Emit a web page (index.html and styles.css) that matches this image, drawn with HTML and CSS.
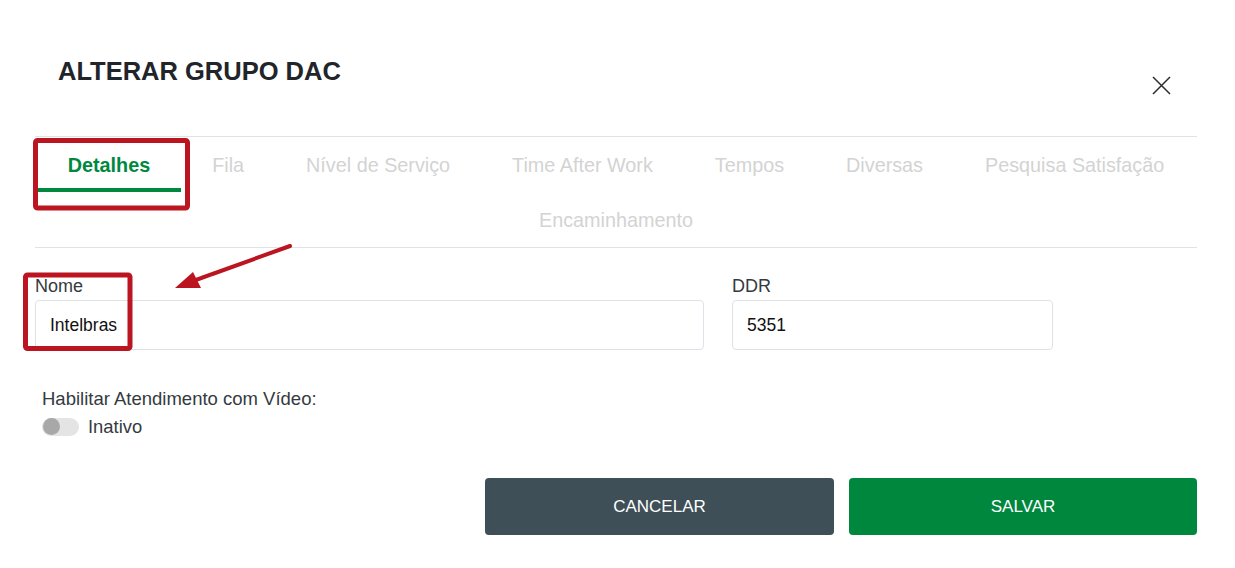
FILE: index.html
```html
<!DOCTYPE html>
<html lang="pt-BR">
<head>
<meta charset="utf-8">
<title>Alterar Grupo DAC</title>
<link rel="stylesheet" href="styles.css">
</head>
<body>
<div class="modal">
  <div class="modal-header">
    <h1 class="modal-title">ALTERAR GRUPO DAC</h1>
    <button class="close" aria-label="Fechar">
      <svg width="19" height="19" viewBox="0 0 19 19"><path d="M1 1 L18 18 M18 1 L1 18" stroke="#2b2b2b" stroke-width="1.5" fill="none"/></svg>
    </button>
  </div>
  <nav class="tabs">
    <span class="tab active">Detalhes</span>
    <span class="tab">Fila</span>
    <span class="tab">Nível de Serviço</span>
    <span class="tab">Time After Work</span>
    <span class="tab">Tempos</span>
    <span class="tab">Diversas</span>
    <span class="tab">Pesquisa Satisfação</span>
    <span class="tab">Encaminhamento</span>
  </nav>
  <div class="form">
    <div class="row">
      <div class="group group-name">
        <label class="label">Nome</label>
        <input class="input" value="Intelbras">
      </div>
      <div class="group group-ddr">
        <label class="label">DDR</label>
        <input class="input" value="5351">
      </div>
    </div>
    <div class="video">
      <div class="label video-label">Habilitar Atendimento com Vídeo:</div>
      <div class="switch-row">
        <span class="switch"><span class="knob"></span></span>
        <span class="switch-text">Inativo</span>
      </div>
    </div>
    <div class="actions">
      <button class="btn btn-cancel">CANCELAR</button>
      <button class="btn btn-save">SALVAR</button>
    </div>
  </div>
</div>
<svg class="annotations" width="1235" height="568" viewBox="0 0 1235 568">
  <rect x="35.5" y="140.5" width="152" height="67.5" rx="2" fill="none" stroke="#bb1521" stroke-width="5"/>
  <rect x="25.5" y="275" width="104.5" height="73.5" rx="2" fill="none" stroke="#bb1521" stroke-width="5"/>
  <line x1="290" y1="246" x2="193" y2="281" stroke="#bb1521" stroke-width="4" stroke-linecap="round"/>
  <polygon points="175,288 193,272 201,288" fill="#bb1521"/>
</svg>
</body>
</html>
```

FILE: styles.css
```css
* { box-sizing: border-box; }

body {
  margin: 0;
  background: #fff;
  font-family: "Liberation Sans", Arial, sans-serif;
  position: relative;
}

.modal {
  padding: 0 38px 0 35px;
}

.modal-header {
  height: 136px;
  padding: 56px 26px 0 23px;
  display: flex;
  justify-content: space-between;
  align-items: flex-start;
}

.modal-title {
  margin: 0;
  font-size: 25.5px;
  line-height: 30px;
  font-weight: bold;
  color: #212529;
}

.close {
  margin-top: 20px;
  width: 19px;
  height: 19px;
  padding: 0;
  border: 0;
  background: none;
  display: block;
}
.close svg { display: block; }

.tabs {
  border-top: 1px solid #e0e2e5;
  border-bottom: 1px solid #e0e2e5;
  display: flex;
  flex-wrap: wrap;
  justify-content: center;
}

.tab {
  padding: 17px 31px 12px;
  font-size: 19.8px;
  line-height: 22px;
  color: #d3d3d3;
  border-bottom: 4px solid transparent;
  white-space: nowrap;
}

.tab.active {
  color: #00893e;
  font-weight: bold;
  border-bottom-color: #00893e;
}

.form {
  padding-top: 28px;
}

.row {
  display: flex;
  gap: 28px;
}

.group-name { width: 669px; }
.group-ddr { width: 321px; }

.label {
  display: block;
  font-size: 18px;
  line-height: 21px;
  color: #343a40;
  margin-bottom: 3px;
}

.input {
  display: block;
  width: 100%;
  height: 50px;
  border: 1px solid #dfe2e6;
  border-radius: 4px;
  padding: 0 14px;
  font-family: "Liberation Sans", Arial, sans-serif;
  font-size: 17.5px;
  color: #111;
  background: #fff;
  outline: none;
}

.video {
  margin-top: 38px;
  padding-left: 7px;
}

.video-label {
  font-size: 18.5px;
  margin-bottom: 0;
}

.switch-row {
  margin-top: 7px;
  display: flex;
  align-items: center;
  gap: 9px;
}

.switch {
  width: 37px;
  height: 18px;
  border-radius: 9px;
  background: #e4e4e4;
  display: flex;
  align-items: center;
  padding-left: 1px;
}

.knob {
  width: 17px;
  height: 17px;
  border-radius: 50%;
  background: #a8a8a8;
}

.switch-text {
  font-size: 18.4px;
  line-height: 21px;
  color: #343a40;
}

.actions {
  margin-top: 41px;
  display: flex;
  justify-content: flex-end;
  gap: 15px;
}

.btn {
  width: 349px;
  height: 57px;
  border: 0;
  border-radius: 4px;
  color: #fff;
  font-family: "Liberation Sans", Arial, sans-serif;
  font-size: 17px;
}

.btn-cancel { background: #3e4f57; }
.btn-save { background: #00873e; width: 348px; }

.annotations {
  position: absolute;
  left: 0;
  top: 0;
  pointer-events: none;
}
```
